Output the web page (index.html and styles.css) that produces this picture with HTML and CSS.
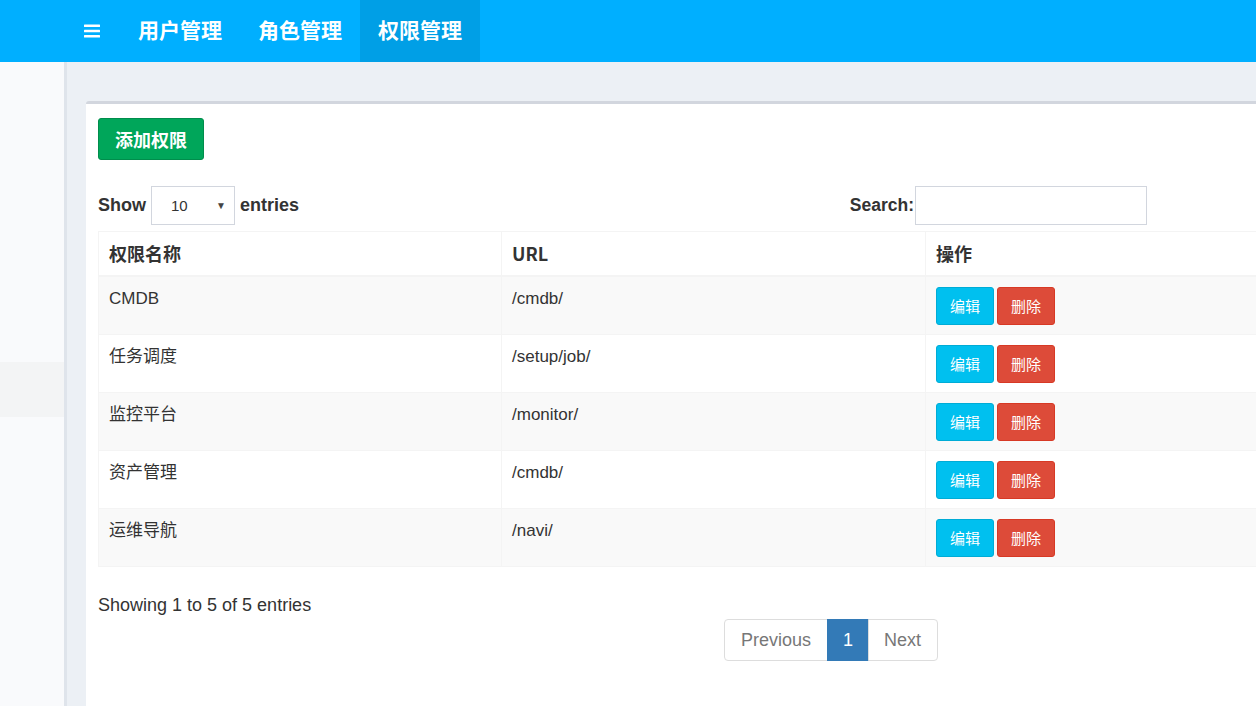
FILE: index.html
```html
<!DOCTYPE html>
<html lang="zh-CN">
<head>
<meta charset="utf-8">
<title>权限管理</title>
<link rel="stylesheet" href="styles.css">
</head>
<body>
<header class="topbar">
  <div class="toggle">
    <svg width="16" height="14" viewBox="0 0 16 14"><rect x="0" y="0.5" width="16" height="2.6" rx="0.5" fill="#fff"/><rect x="0" y="5.7" width="16" height="2.6" rx="0.5" fill="#fff"/><rect x="0" y="10.9" width="16" height="2.6" rx="0.5" fill="#fff"/></svg>
  </div>
  <nav class="menu">
    <a class="menu-item">用户管理</a>
    <a class="menu-item">角色管理</a>
    <a class="menu-item active">权限管理</a>
  </nav>
</header>
<div class="main">
  <aside class="sidebar"><div class="side-item"></div></aside>
  <section class="content">
    <div class="box">
      <button class="btn-add">添加权限</button>
      <div class="controls">
        <label class="length">Show <span class="select">10<span class="caret">▼</span></span> entries</label>
        <label class="filter">Search:<span class="search"></span></label>
      </div>
      <table class="grid">
        <colgroup><col class="c1"><col class="c2"><col class="c3"></colgroup>
        <thead>
          <tr><th>权限名称</th><th>URL</th><th>操作</th></tr>
        </thead>
        <tbody>
          <tr class="odd"><td>CMDB</td><td>/cmdb/</td><td><span class="btn edit">编辑</span><span class="btn del">删除</span></td></tr>
          <tr><td>任务调度</td><td>/setup/job/</td><td><span class="btn edit">编辑</span><span class="btn del">删除</span></td></tr>
          <tr class="odd"><td>监控平台</td><td>/monitor/</td><td><span class="btn edit">编辑</span><span class="btn del">删除</span></td></tr>
          <tr><td>资产管理</td><td>/cmdb/</td><td><span class="btn edit">编辑</span><span class="btn del">删除</span></td></tr>
          <tr class="odd"><td>运维导航</td><td>/navi/</td><td><span class="btn edit">编辑</span><span class="btn del">删除</span></td></tr>
        </tbody>
      </table>
      <div class="footer">
        <div class="info">Showing 1 to 5 of 5 entries</div>
        <ul class="pager">
          <li class="pg disabled">Previous</li>
          <li class="pg current">1</li>
          <li class="pg disabled">Next</li>
        </ul>
      </div>
    </div>
  </section>
</div>
</body>
</html>
```
FILE: styles.css
```css
* { box-sizing: border-box; }
html, body { margin: 0; padding: 0; height: 100%; overflow: hidden; }
body {
  font-family: "Liberation Sans", Arial, "Noto Sans CJK SC", sans-serif;
  color: #333;
  background: #ecf0f5;
}
.topbar {
  height: 62px;
  background: #00afff;
  display: flex;
  align-items: stretch;
}
.toggle {
  width: 120px;
  display: flex;
  align-items: center;
  justify-content: flex-end;
  padding-right: 20px;
}
.menu { display: flex; }
.menu-item {
  display: flex;
  align-items: center;
  justify-content: center;
  width: 120px;
  padding-bottom: 4px;
  white-space: nowrap;
  color: #fff;
  font-size: 21px;
  font-weight: bold;
  font-family: "Noto Sans CJK SC", sans-serif;
}
.menu-item.active { background: #009fe6; }
.main {
  display: flex;
  height: calc(100% - 62px);
}
.sidebar {
  width: 67px;
  flex: none;
  background: #f9fafc;
  border-right: 3px solid #dfe4eb;
  padding-top: 300px;
}
.side-item { height: 55px; background: #f3f4f5; }
.content {
  flex: none;
  padding: 39px 0 0 19px;
}
.box {
  width: 1300px;
  background: #fff;
  border-top: 3px solid #d2d6de;
  border-radius: 3px 0 0 0;
  padding: 14px 12px;
  height: 700px;
}
.btn-add {
  display: block;
  height: 42px;
  padding: 0 16px;
  border: 1px solid #008d4c;
  border-radius: 3px;
  background: #00a65a;
  color: #fff;
  font-size: 18px;
  font-weight: bold;
  font-family: "Noto Sans CJK SC", sans-serif;
  line-height: 40px;
}
.controls {
  width: 1049px;
  margin-top: 26px;
  display: flex;
  justify-content: space-between;
  align-items: center;
  height: 39px;
}
.length, .filter {
  display: flex;
  align-items: center;
  font-size: 18px;
  font-weight: bold;
  color: #333;
}
.filter { font-size: 17.5px; }
.select {
  display: inline-flex;
  align-items: center;
  justify-content: space-between;
  width: 84px;
  height: 39px;
  margin: 0 5px;
  padding: 0 8px 0 19px;
  border: 1px solid #d2d6de;
  font-size: 15px;
  font-weight: normal;
  color: #333;
}
.caret { font-size: 10px; color: #444; }
.search {
  display: inline-block;
  width: 232px;
  height: 39px;
  margin-left: 1px;
  border: 1px solid #d2d6de;
}
.grid {
  margin-top: 6px;
  width: 1290px;
  border-collapse: collapse;
  table-layout: fixed;
  border: 1px solid #f4f4f4;
}
.c1 { width: 403px; }
.c2 { width: 424px; }
.grid th, .grid td {
  border: 1px solid #f4f4f4;
  text-align: left;
  vertical-align: top;
  padding: 10px 10px;
}
.grid th {
  font-family: "Noto Sans CJK SC", "Liberation Sans", sans-serif;
  font-size: 18px;
  font-weight: bold;
  line-height: 23px;
  color: #333;
  border-bottom-width: 2px;
}
.grid td {
  font-size: 17px;
  line-height: 22px;
  color: #333;
  height: 57px;
  padding-top: 11px;
  padding-bottom: 8px;
}
.grid td:last-child { padding-top: 10px; padding-bottom: 9px; }
.grid tr.odd td { background: #f9f9f9; }
.btn {
  display: inline-block;
  width: 58px;
  height: 38px;
  line-height: 36px;
  text-align: center;
  border-radius: 3px;
  color: #fff;
  font-size: 15px;
  font-family: "Noto Sans CJK SC", sans-serif;
  border: 1px solid transparent;
  vertical-align: top;
}
.btn.edit { background: #00c0ef; border-color: #00acd6; }
.btn.del { background: #dd4b39; border-color: #d73925; margin-left: 3px; }
.footer {
  display: grid;
  grid-template-columns: 626px auto;
  margin-top: 26px;
}
.info {
  grid-row: 1;
  grid-column: 1 / span 2;
  font-size: 18px;
  line-height: 24px;
}
.pager {
  list-style: none;
  margin: 2px 0 0;
  padding: 0;
  grid-row: 2;
  grid-column: 2;
  display: flex;
}
.pg {
  height: 42px;
  line-height: 40px;
  font-size: 18px;
  padding: 0 15px;
  border: 1px solid #ddd;
  color: #777;
  background: #fff;
}
.pg:first-child { border-radius: 4px 0 0 4px; padding: 0 16px; }
.pg:last-child { border-radius: 0 4px 4px 0; padding: 0 16px 0 15px; }
.pg + .pg { margin-left: -1px; }
.pg.current {
  background: #337ab7;
  border-color: #337ab7;
  color: #fff;
}
```
